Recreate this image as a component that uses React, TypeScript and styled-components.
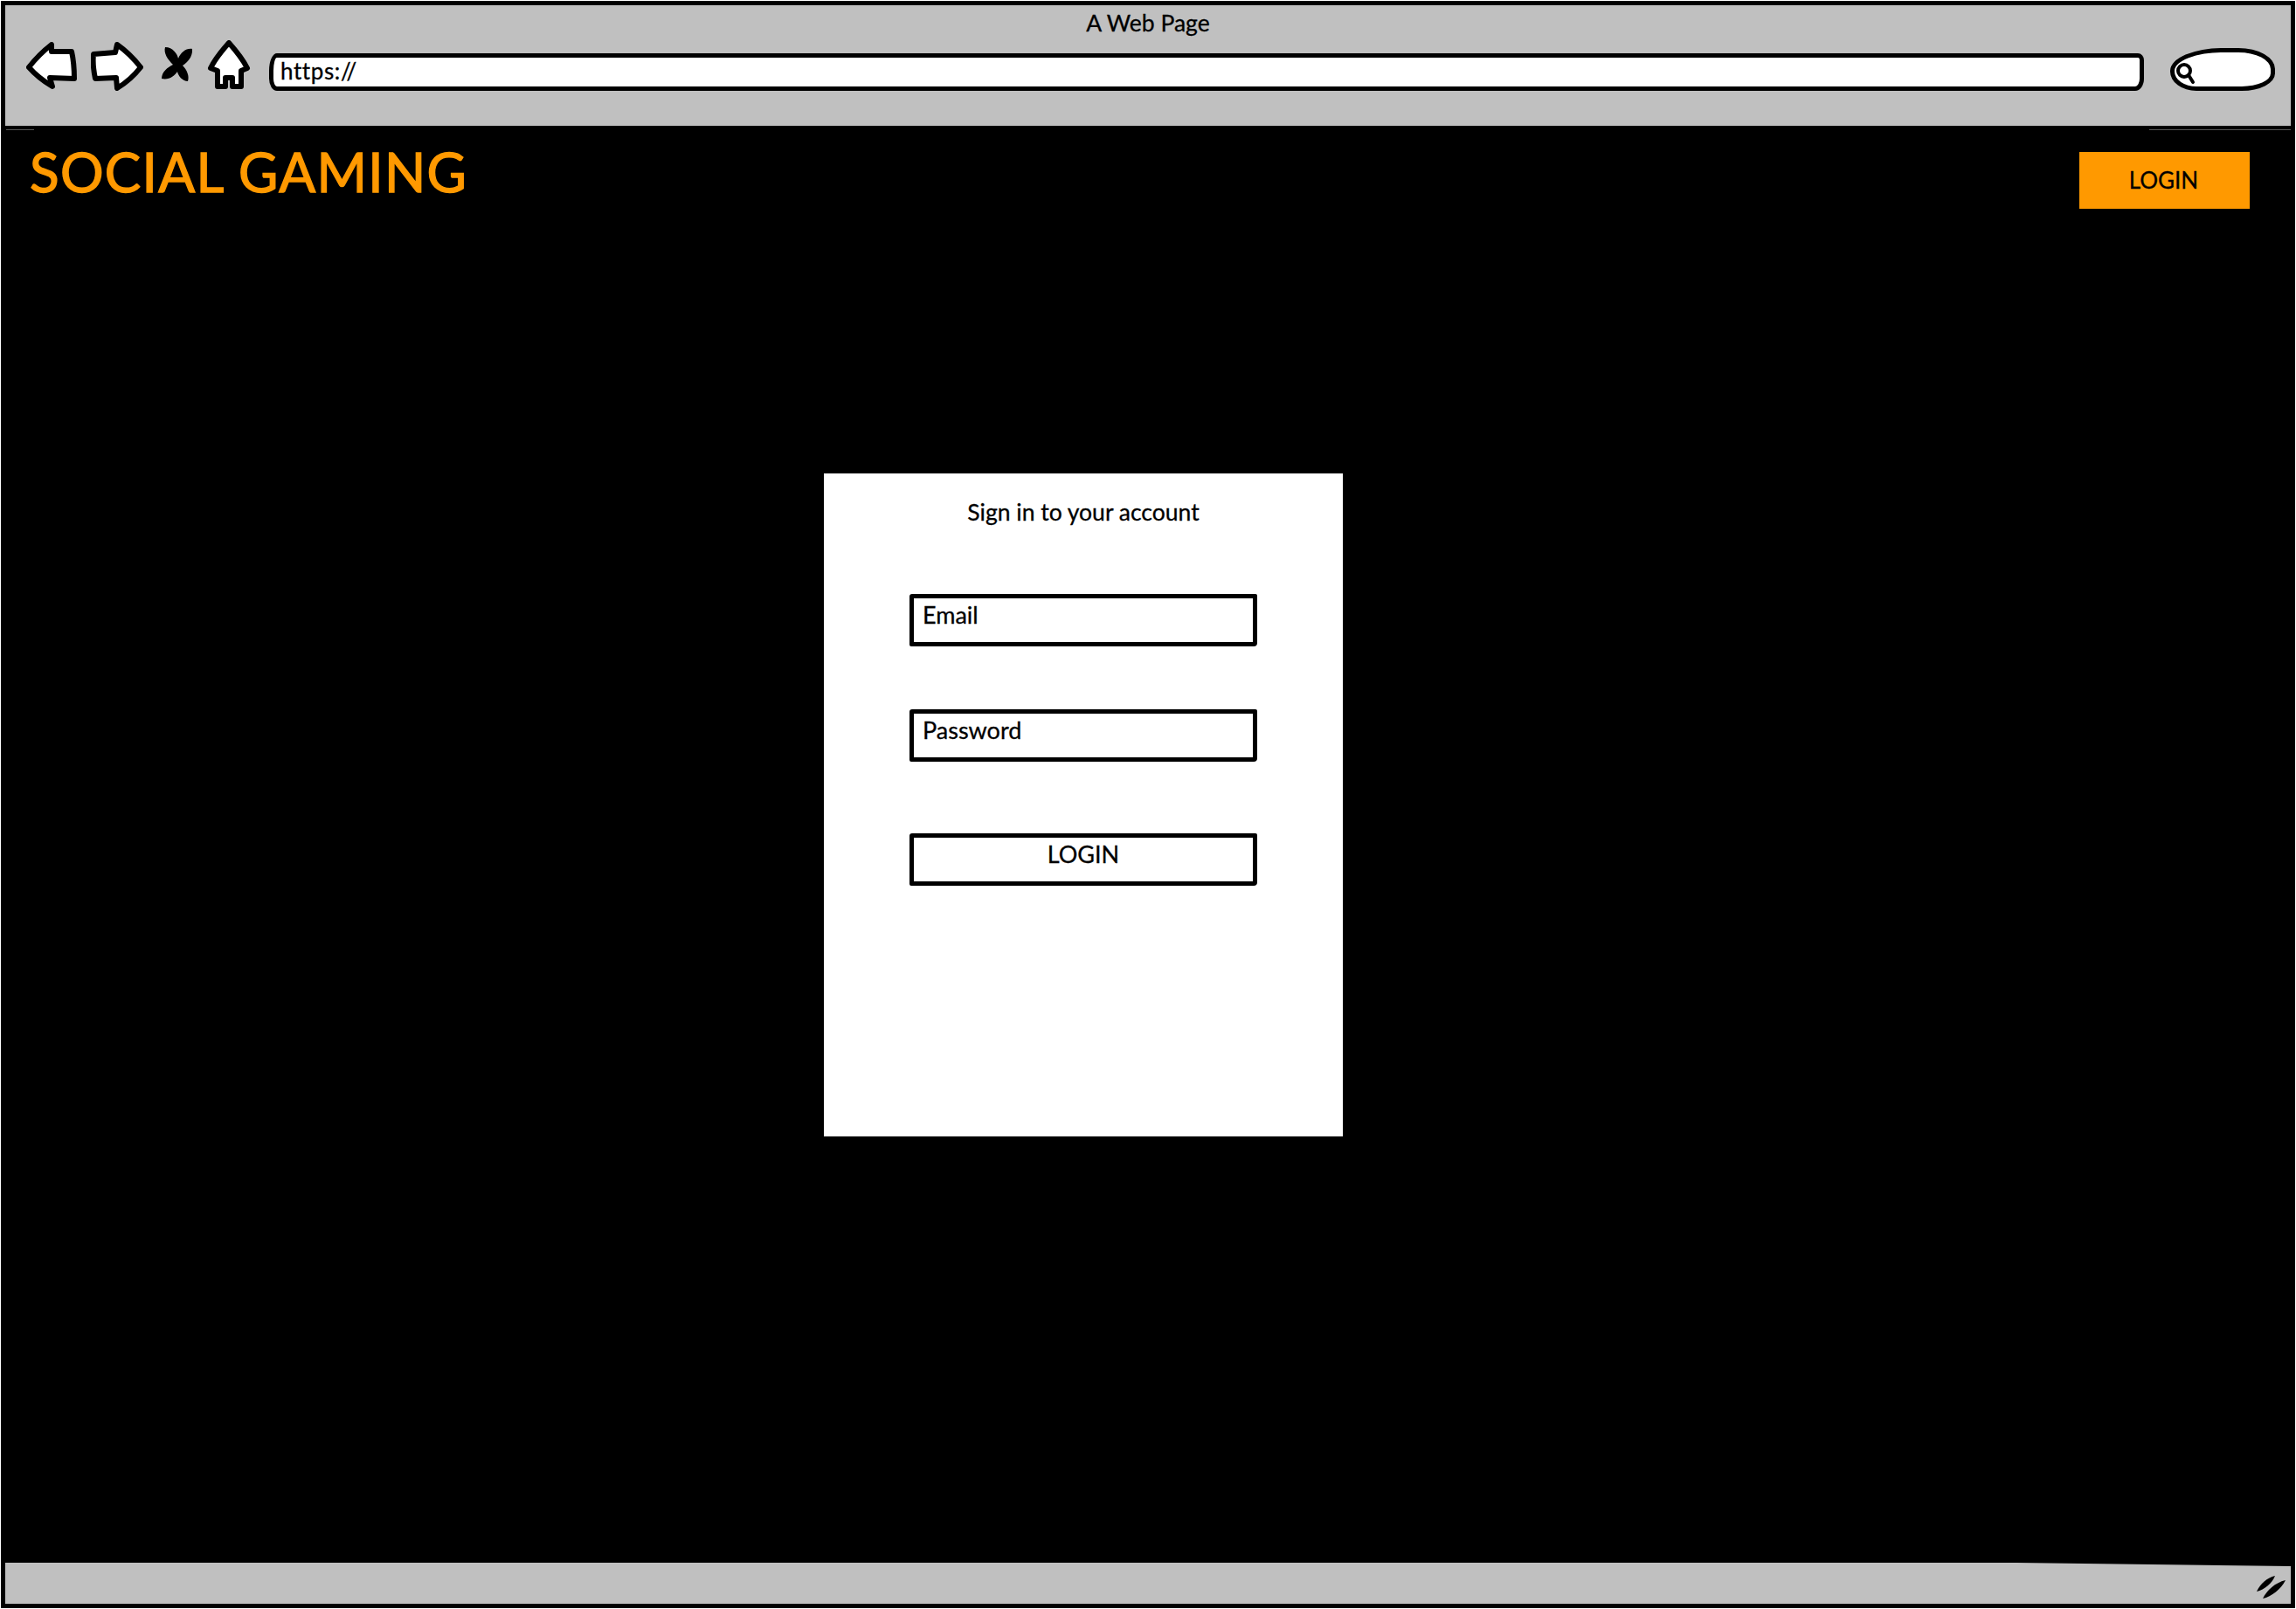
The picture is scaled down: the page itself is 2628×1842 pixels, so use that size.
import React from "react";
import styled, { createGlobalStyle } from "styled-components";

const Global = createGlobalStyle`
  html, body { margin: 0; padding: 0; background: #fff; }
  * { box-sizing: border-box; }
  body { font-family: "Lato", "Noto Sans", sans-serif; color: #000; -webkit-text-stroke: 0.3px currentColor; }
`;

const Window = styled.div`
  width: 2626px;
  height: 1840px;
  margin: 1px;
  border: 5px solid #000;
  background: #000;
  display: flex;
  flex-direction: column;
`;

const TopBar = styled.header`
  position: relative;
  height: 138px;
  flex: none;
  background: #c0c0c0;
  padding: 6px 0 0 24px;

  &::before,
  &::after {
    content: "";
    position: absolute;
    top: 142px;
    height: 1px;
    background: #555;
  }
  &::before { left: 1px; width: 32px; }
  &::after { right: 0; width: 162px; }
`;

const Title = styled.div`
  margin-left: -24px;
  text-align: center;
  font-size: 26.5px;
  line-height: 28px;
  height: 28px;
`;

const NavRow = styled.div`
  display: flex;
  align-items: flex-start;
  margin-top: 3px;
`;

const NavIcon = styled.svg<{ $gap: number; $top: number }>`
  flex: none;
  display: block;
  margin-right: ${(p) => p.$gap}px;
  margin-top: ${(p) => p.$top}px;
`;

const UrlField = styled.div`
  flex: none;
  width: 2146px;
  height: 43px;
  margin-top: 18px;
  background: #fff;
  border: 5px solid #000;
  border-radius: 9px 7px 10px 9px / 20px 8px 14px 14px;
  padding-left: 8px;
  font-size: 26px;
  line-height: 30px;
  letter-spacing: 0.6px;
  white-space: nowrap;
`;

const SearchField = styled.div`
  flex: none;
  width: 120px;
  height: 49px;
  margin: 12px 0 0 30px;
  background: #fff;
  border: 5px solid #000;
  border-radius: 60px 42px 38px 30px / 26px 24px 20px 22px;
  padding: 11px 0 0 1px;
  display: flex;
`;

const Content = styled.main`
  flex: 1;
  min-height: 0;
  background: #000;
`;

const Header = styled.div`
  display: flex;
  justify-content: space-between;
  align-items: flex-start;
  padding: 30px 47px 0 28px;
`;

const Logo = styled.h1`
  margin: 0;
  color: #ff9900;
  font-size: 62px;
  line-height: 44px;
  font-weight: 400;
  letter-spacing: 1.3px;
  white-space: nowrap;
  -webkit-text-stroke: 1.4px #ff9900;
`;

const TopLogin = styled.button`
  width: 195px;
  height: 65px;
  border: 0;
  padding: 0 2px 2px 0;
  background: #ff9900;
  color: #000;
  font: inherit;
  font-size: 26px;
`;

const Card = styled.section`
  width: 594px;
  height: 759px;
  margin: 303px 0 0 937px;
  background: #fff;
  padding: 26px 98px 0 98px;
  display: flex;
  flex-direction: column;
`;

const CardTitle = styled.h2`
  margin: 0;
  font-size: 26.5px;
  font-weight: 400;
  line-height: 36px;
  text-align: center;
`;

const Field = styled.div<{ $top: number; $center?: boolean }>`
  height: 60px;
  margin-top: ${(p) => p.$top}px;
  border: 5px solid #000;
  border-radius: 3px 2px 4px 2px;
  background: #fff;
  font-size: 27px;
  line-height: 38px;
  padding-left: ${(p) => (p.$center ? 0 : 10)}px;
  text-align: ${(p) => (p.$center ? "center" : "left")};
`;

const BottomBar = styled.footer`
  height: 47px;
  flex: none;
  margin-top: auto;
  background: #c0c0c0;
  clip-path: polygon(0 0, 88% 0, 100% 4px, 100% 100%, 0 100%);
  display: flex;
  justify-content: flex-end;
  align-items: flex-start;
  padding: 14px 4px 0 0;
`;

export default function App() {
  return (
    <>
      <Global />
      <Window>
        <TopBar>
          <Title>A Web Page</Title>
          <NavRow>
            <NavIcon $gap={14} $top={5} width="60" height="56" viewBox="0 0 60 56" fill="#fff" stroke="#000" strokeWidth="6" strokeLinejoin="round">
              <path d="M3 29 C10 20 20 10 29 3 L29 11 L52 11 C54 20 55 32 55 42 L27 41 L30 51 C20 45 10 37 3 29 Z" />
            </NavIcon>
            <NavIcon $gap={20} $top={5} width="60" height="56" viewBox="0 0 60 56" fill="#fff" stroke="#000" strokeWidth="6" strokeLinejoin="round">
              <path d="M3 14 L28 12 L30 3 C40 10 50 20 57 29 C50 38 40 47 30 53 L29 41 L5 42 C3 32 2 22 3 14 Z" />
            </NavIcon>
            <NavIcon $gap={15} $top={9} width="38" height="44" viewBox="0 0 38 44" fill="#000">
              <path d="M5 2 C14 2 19 10 20 15 C23 8 29 3 36 4 C37 13 30 20 25 23 C30 28 33 35 31 41 C25 41 20 35 19 30 C16 35 9 40 1 38 C1 30 8 25 14 22 C8 16 3 9 5 2 Z" />
            </NavIcon>
            <NavIcon $gap={21} $top={3} width="50" height="56" viewBox="0 0 50 56" fill="#fff" stroke="#000" strokeWidth="6" strokeLinejoin="round">
              <path d="M25 3 C33 12 41 22 46 32 L39 35 L39 53 L29 53 L29 43 L21 43 L21 53 L12 53 L12 35 L4 32 C9 22 17 12 25 3 Z" />
            </NavIcon>
            <UrlField>https://</UrlField>
            <SearchField>
              <svg width="26" height="26" viewBox="0 0 26 26" fill="none" stroke="#000" strokeWidth="4" strokeLinecap="round">
                <circle cx="10" cy="10" r="7" />
                <path d="M15 15 L20 23" />
              </svg>
            </SearchField>
          </NavRow>
        </TopBar>
        <Content>
          <Header>
            <Logo>SOCIAL GAMING</Logo>
            <TopLogin>LOGIN</TopLogin>
          </Header>
          <Card>
            <CardTitle>Sign in to your account</CardTitle>
            <Field $top={76}>Email</Field>
            <Field $top={72}>Password</Field>
            <Field $top={82} $center>LOGIN</Field>
          </Card>
        </Content>
        <BottomBar>
          <svg width="36" height="28" viewBox="0 0 36 28" fill="#000">
            <path d="M1 19 C5 10 13 3 22 1 C19 9 10 17 1 19 Z" />
            <path d="M8 27 C13 17 22 9 34 6 C29 16 18 25 8 27 Z" />
          </svg>
        </BottomBar>
      </Window>
    </>
  );
}
